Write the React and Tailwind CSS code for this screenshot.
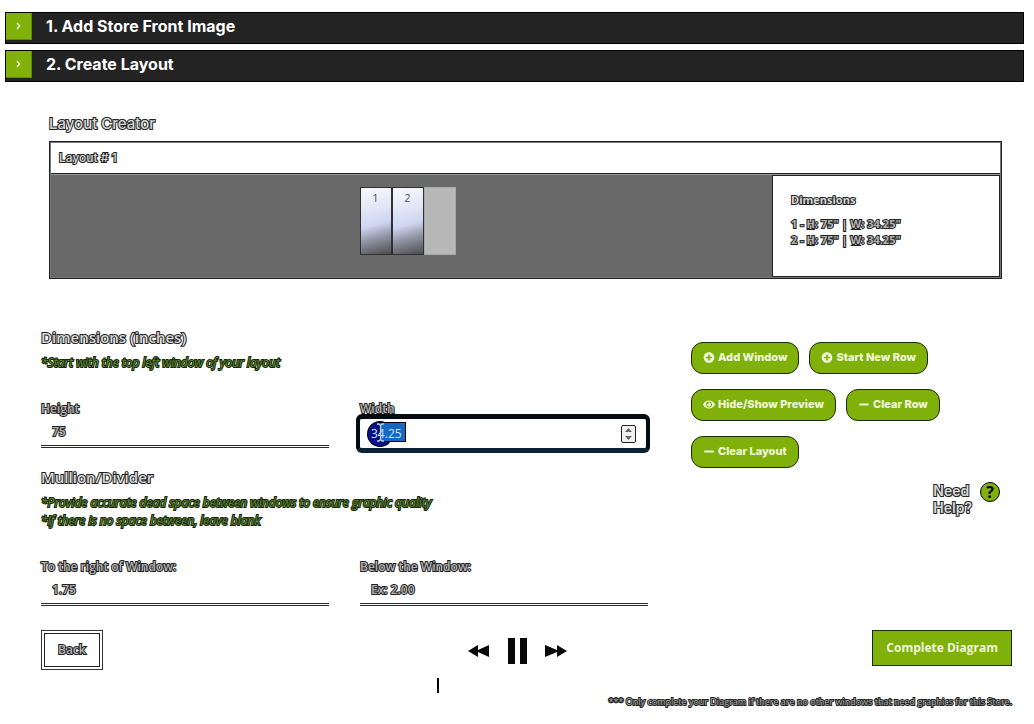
import React from "react";
import { FaPlusCircle, FaEye, FaMinus } from "react-icons/fa";

const outlined = "text-[#d9d9d9] [-webkit-text-stroke:2px_#222] [paint-order:stroke_fill]";
const outlinedSmall = "text-[#b4b4b4] [-webkit-text-stroke:2px_#222] [paint-order:stroke_fill]";
const hint = "text-xs leading-[18px] font-medium italic text-[#5d8a2c] [-webkit-text-stroke:2px_#16240b] [paint-order:stroke_fill]";

function SectionBar({ title }) {
  return (
    <button type="button" className="flex h-8 w-full items-start border border-black bg-[#232323] text-left">
      <span className="flex h-[27px] w-[26px] items-center justify-center border-r border-b border-[#5f8a0c] bg-[#80b10b]">
        <svg width="5" height="8" viewBox="0 0 5 8" fill="none" stroke="#e6f2c4" strokeWidth="1.4" aria-hidden="true">
          <path d="M1 1l2.6 3L1 7" />
        </svg>
      </span>
      <span className="pl-3.5 font-['Inter',sans-serif] text-base leading-[27px] font-bold text-white">{title}</span>
    </button>
  );
}

function Heading({ children }) {
  return <h2 className={`text-[15px] leading-5 font-semibold ${outlined}`}>{children}</h2>;
}

function Field({ id, label, value, placeholder }) {
  return (
    <div>
      <label htmlFor={id} className={`block text-xs leading-4 font-semibold ${outlinedSmall}`}>{label}</label>
      <input
        id={id}
        type="text"
        defaultValue={value}
        placeholder={placeholder}
        className={`block h-[31px] w-full border-b-3 border-double border-[#2a2a2a] bg-transparent px-[11px] text-xs font-semibold outline-none placeholder:text-[#b4b4b4] ${outlinedSmall}`}
      />
    </div>
  );
}

function WidthField() {
  return (
    <div>
      <label htmlFor="width" className={`relative z-10 block w-fit text-xs leading-4 font-semibold ${outlinedSmall}`}>Width</label>
      <div className="relative -mr-0.5 -mt-[3px] -mb-1 -ml-1 flex h-[39px] items-center rounded-md border-[5px] border-x-4 border-[#050b10] border-b-[#0b2236] bg-white pr-2.5">
        <span className="absolute top-[3px] left-2 h-6 w-6 rounded-full bg-[#06128a] ring-1 ring-black" />
        <span className="absolute top-[4px] left-5 h-[18px] w-[25px] bg-[#1767c4] ring-1 ring-black" />
        <input
          id="width"
          type="text"
          defaultValue="34.25"
          className="relative h-full min-w-0 flex-1 bg-transparent pl-[11px] text-xs text-[#cfe3f5] outline-none"
        />
        <svg className="absolute top-1 left-4" width="9" height="19" viewBox="0 0 9 19" fill="none" stroke="#b9d2ec" strokeWidth="1.4" aria-hidden="true">
          <path d="M1 1h2l1.500 1.500L6 1h2M4.500 2.500v14M1 18h2l1.500-1.500L6 18h2" />
        </svg>
        <button type="button" aria-label="Step width" className="flex h-[18px] w-[15px] items-center justify-center rounded-xs border border-[#222] bg-[#f1f1f1]">
          <svg width="7" height="12" viewBox="0 0 7 12" fill="#666" aria-hidden="true">
            <path d="M3.500 0L7 4H0zM3.500 12L0 8h7z" />
          </svg>
        </button>
      </div>
    </div>
  );
}

function PillButton({ icon: Icon, children }) {
  return (
    <button type="button" className="flex h-8 items-center gap-[3px] rounded-xl border border-[#1c2a02] bg-[#80b10b] px-[11px] pb-0.5 font-['Inter',sans-serif] text-[11px] font-extrabold whitespace-nowrap text-[#f0f7da]">
      <Icon className="h-[11px] w-3" aria-hidden="true" />
      {children}
    </button>
  );
}

function Pane({ number }) {
  return (
    <div className="h-[68px] w-8 border border-[#303030] bg-[linear-gradient(165deg,#f8f9fd_0%,#e2e6f5_32%,#cdd5ef_55%,#8d92a0_75%,#4c4c4e_100%)] pt-0.5 text-center text-[11px] leading-4 text-[#555]">
      {number}
    </div>
  );
}

export default function App() {
  return (
    <main className="bg-white pt-3 pb-4 font-['Open_Sans',sans-serif]">
      <div className="flex flex-col gap-1.5 pr-2.5 pl-[5px]">
        <SectionBar title="1. Add Store Front Image" />
        <SectionBar title="2. Create Layout" />
      </div>

      <section className="mt-8 pr-8 pl-[49px]">
        <h2 className={`font-['Inter',sans-serif] text-[15px] leading-5 font-medium ${outlined}`}>Layout Creator</h2>
        <div className="mt-[7px] border-2 border-[#777] outline -outline-offset-1 outline-[#222]">
          <div className="h-[31px] border-b border-[#222] pl-2">
            <h3 className={`font-['Inter',sans-serif] text-xs leading-[30px] font-medium ${outlined}`}>Layout # 1</h3>
          </div>
          <div className="grid grid-cols-[721fr_228fr] border-t border-[#999]">
            <div className="flex items-start justify-center bg-[#696969] pt-3 pr-2">
              <Pane number="1" />
              <Pane number="2" />
              <div className="h-[68px] w-8 border border-[#aaa] bg-[#b8b8b8]" />
            </div>
            <div className="border border-[#222] pt-4 pb-7 pl-[18px]">
              <h3 className={`text-[11px] leading-4 font-bold ${outlined}`}>Dimensions</h3>
              <ul className={`mt-2 text-[11px] leading-4 font-bold ${outlinedSmall}`}>
                <li>1 - <u>H</u>: 75" | <u>W</u>: 34.25"</li>
                <li>2 - <u>H</u>: 75" | <u>W</u>: 34.25"</li>
              </ul>
            </div>
          </div>
        </div>
      </section>

      <div className="mt-12 grid grid-cols-[607fr_321fr] gap-[43px] pr-[22px] pl-[41px]">
        <form>
          <Heading>Dimensions (inches)</Heading>
          <p className={`mt-[7px] ${hint}`}>*Start with the top left window of your layout</p>
          <div className="mt-[29px] grid grid-cols-2 gap-[31px]">
            <Field id="height" label="Height" value="75" />
            <WidthField />
          </div>
          <div className="mt-[18px]">
            <Heading>Mullion/Divider</Heading>
          </div>
          <p className={`mt-[7px] ${hint}`}>*Provide accurate dead space between windows to ensure graphic quality</p>
          <p className={hint}>*If there is no space between, leave blank</p>
          <div className="mt-[29px] grid grid-cols-2 gap-[31px]">
            <Field id="right" label="To the right of Window:" value="1.75" />
            <Field id="below" label="Below the Window:" placeholder="Ex: 2.00" />
          </div>
        </form>
        <aside className="pt-[15px]">
          <div className="flex flex-wrap gap-x-2.5 gap-y-[15px]">
            <PillButton icon={FaPlusCircle}>Add Window</PillButton>
            <PillButton icon={FaPlusCircle}>Start New Row</PillButton>
            <PillButton icon={FaEye}>Hide/Show Preview</PillButton>
            <PillButton icon={FaMinus}>Clear Row</PillButton>
            <PillButton icon={FaMinus}>Clear Layout</PillButton>
          </div>
          <a href="#help" className="mt-3.5 mr-3 ml-auto flex w-fit items-start gap-2">
            <span className={`font-['Inter',sans-serif] text-sm leading-[17px] font-semibold ${outlined}`}>Need<br />Help?</span>
            <span className="flex h-5 w-5 items-center justify-center rounded-full border border-black bg-[#80b10b] text-base leading-5 font-bold text-black">?</span>
          </a>
        </aside>
      </div>

      <footer className="relative mt-6 pr-[22px] pl-[41px]">
        <div className="flex items-start justify-between">
          <button type="button" className="border border-[#333] p-0.5">
            <span className={`block border border-[#222] px-[13px] py-2 text-xs leading-4 font-semibold ${outlinedSmall}`}>Back</span>
          </button>
          <button type="button" className="h-9 border border-[#1c2a02] bg-[#80b10b] px-[13px] text-xs font-bold text-[#eef6d8]">Complete Diagram</button>
        </div>
        <div className="absolute inset-x-0 top-2 flex items-center justify-center gap-[18px] text-[#080808]">
          <button type="button" aria-label="Rewind">
            <svg width="22" height="12" viewBox="0 0 22 12" fill="currentColor" aria-hidden="true"><path d="M0 6L10 0v5l11-5v12L10 7v5z" /></svg>
          </button>
          <button type="button" aria-label="Pause">
            <svg width="19" height="26" viewBox="0 0 19 26" fill="currentColor" aria-hidden="true"><path d="M0 0h7v26H0zM12 0h7v26h-7z" /></svg>
          </button>
          <button type="button" aria-label="Fast forward">
            <svg width="22" height="12" viewBox="0 0 22 12" fill="currentColor" aria-hidden="true"><path d="M22 6L12 0v5L0 0v12l12-5v5z" /></svg>
          </button>
        </div>
        <span className="absolute top-12 left-[437px] h-[15px] w-0.5 bg-black" />
        <p className={`mt-6 text-right text-[9px] leading-4 ${outlinedSmall}`}>
          *** Only complete your Diagram if there are no other windows that need graphics for this Store.
        </p>
      </footer>
    </main>
  );
}
